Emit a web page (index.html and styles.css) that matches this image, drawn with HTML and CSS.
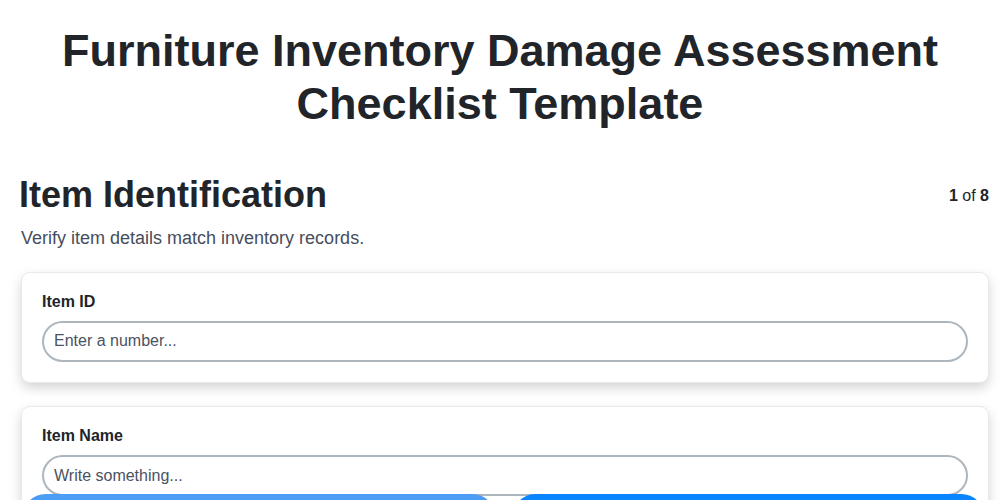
FILE: index.html
```html
<!DOCTYPE html>
<html lang="en">
<head>
<meta charset="utf-8">
<title>Furniture Inventory Damage Assessment Checklist Template</title>
<link rel="stylesheet" href="styles.css">
</head>
<body>
<main class="page">
  <h1 class="title">Furniture Inventory Damage Assessment Checklist Template</h1>
  <section class="step">
    <header class="step-head">
      <h2 class="step-title">Item Identification</h2>
      <div class="step-count"><b>1</b> of <b>8</b></div>
    </header>
    <p class="step-desc">Verify item details match inventory records.</p>
    <div class="card">
      <label class="field-label" for="item-id">Item ID</label>
      <input class="field-input" id="item-id" type="text" placeholder="Enter a number...">
    </div>
    <div class="card">
      <label class="field-label" for="item-name">Item Name</label>
      <input class="field-input" id="item-name" type="text" placeholder="Write something...">
    </div>
  </section>
</main>
<nav class="nav-bar">
  <button class="nav-btn nav-prev" type="button">Previous</button>
  <button class="nav-btn nav-next" type="button">Next</button>
</nav>
</body>
</html>
```
FILE: styles.css
```css
* { box-sizing: border-box; }
html, body { margin: 0; padding: 0; background: #ffffff; }
body {
  font-family: "Liberation Sans", Arial, sans-serif;
  color: #212529;
  overflow: hidden;
}
.page {
  padding: 24px 11px 0 21px;
}
.title {
  margin: 0 0 0 -10px;
  font-size: 45px;
  line-height: 53px;
  font-weight: 700;
  text-align: center;
  color: #212529;
}
.step { margin-top: 43px; }
.step-head {
  display: flex;
  justify-content: space-between;
  align-items: center;
}
.step-title {
  margin: 0 0 0 -2px;
  font-size: 36px;
  line-height: 1.2;
  font-weight: 700;
  color: #212529;
}
.step-count {
  font-size: 16px;
  color: #212529;
  margin-top: 2px;
}
.step-count b { font-weight: 700; }
.step-desc {
  margin: 12px 0 22px;
  font-size: 18px;
  line-height: 1.2;
  color: #464d5c;
}
.card {
  background: #ffffff;
  border: 1px solid #e8e9ee;
  border-radius: 9px;
  padding: 19px 20px 20px;
  margin-bottom: 23px;
  box-shadow: 0 5px 12px rgba(0, 0, 0, 0.17);
}
.field-label {
  display: block;
  font-size: 16px;
  font-weight: 700;
  line-height: 1.2;
  margin-bottom: 10px;
  color: #212529;
}
.field-input {
  display: block;
  width: 100%;
  height: 41px;
  padding: 0 10px;
  border: 2px solid #adb5bd;
  border-radius: 21px;
  font-family: "Liberation Sans", Arial, sans-serif;
  font-size: 16px;
  color: #212529;
  background: #ffffff;
  outline: none;
}
.field-input::placeholder { color: #4b5262; opacity: 1; }
.nav-bar {
  position: fixed;
  left: 22px;
  right: 15px;
  top: 494px;
  display: flex;
  gap: 16px;
}
.nav-btn {
  flex: 1;
  height: 48px;
  border: none;
  border-radius: 24px;
  color: #ffffff;
  font-family: "Liberation Sans", Arial, sans-serif;
  font-size: 16px;
  font-weight: 700;
}
.nav-prev { background: #4b9cf5; }
.nav-next { background: #0a84ff; }
```
